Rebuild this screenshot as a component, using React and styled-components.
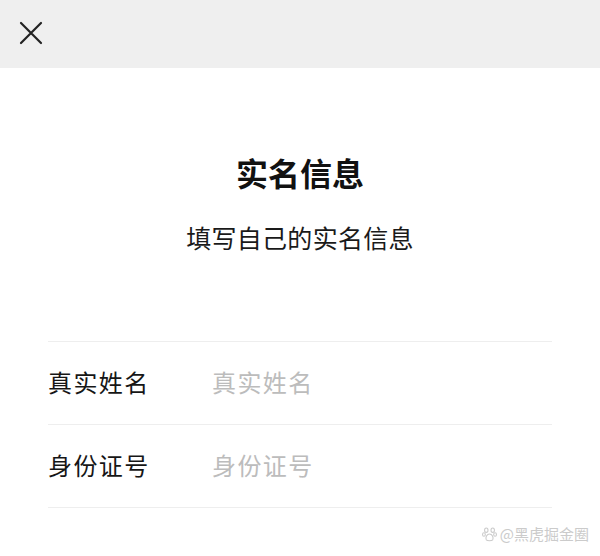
import React from 'react';
import styled, { createGlobalStyle } from 'styled-components';

const GlobalStyle = createGlobalStyle`
    html, body {
        margin: 0;
        padding: 0;
        background: #fff;
        font-family: "Noto Sans CJK SC", "Noto Sans", sans-serif;
    }
`

const Page = styled.div`
    width: 600px;
    height: 556px;
    position: relative;
    overflow: hidden;
    background: #fff;
`
const Header = styled.header`
    height: 68px;
    background: #efefef;
    display: flex;
    align-items: center;
    padding-left: 18px;
`
const CloseButton = styled.button`
    width: 26px;
    height: 26px;
    padding: 0;
    border: none;
    background: transparent;
    display: flex;
    align-items: center;
    justify-content: center;
    margin-top: -2px;
`
const Intro = styled.div`
    display: flex;
    flex-direction: column;
    align-items: center;
    padding-top: 84px;
`
const Title = styled.h1`
    margin: 0;
    font-size: 32px;
    line-height: 40px;
    font-weight: 700;
    color: #111;
`
const Subtitle = styled.p`
    margin: 29px 0 0;
    font-size: 25px;
    line-height: 32px;
    letter-spacing: 0.3px;
    color: #1a1a1a;
`
const Form = styled.div`
    margin: 88px 48px 0;
    border-top: 1px solid #eeeeee;
`
const Row = styled.label`
    display: flex;
    align-items: center;
    height: 83px;
    padding-bottom: 4px;
    box-sizing: border-box;
    border-bottom: 1px solid #eeeeee;
`
const Label = styled.span`
    width: 164px;
    font-size: 24px;
    color: #161616;
    letter-spacing: 1.4px;
`
const Input = styled.input`
    flex: 1;
    border: none;
    outline: none;
    padding: 0;
    font-family: inherit;
    font-size: 24px;
    color: #1a1a1a;
    background: transparent;
    letter-spacing: 1.4px;
    &::placeholder {
        color: #bcbcbc;
    }
`
const Watermark = styled.div`
    position: absolute;
    right: 11px;
    bottom: 13px;
    display: flex;
    align-items: center;
    gap: 3px;
    font-size: 15px;
    line-height: 18px;
    color: #cbcbcb;
`

const CloseIcon = () => (
    <svg width="24" height="24" viewBox="0 0 24 24">
        <path d="M2 2 L22 22 M22 2 L2 22" stroke="#222" strokeWidth="2.2" strokeLinecap="round" />
    </svg>
)

const PawIcon = () => (
    <svg width="15" height="15" viewBox="0 0 14 14" fill="none" stroke="#cbcbcb" strokeWidth="1">
        <ellipse cx="4" cy="3" rx="1.6" ry="2" />
        <ellipse cx="10" cy="3" rx="1.6" ry="2" />
        <ellipse cx="1.8" cy="7" rx="1.3" ry="1.7" />
        <ellipse cx="12.2" cy="7" rx="1.3" ry="1.7" />
        <path d="M7 6.5 C4.5 6.5 3 10 4 12 C5 13.2 9 13.2 10 12 C11 10 9.5 6.5 7 6.5 Z" />
    </svg>
)

const fields = [
    { label: '真实姓名', placeholder: '真实姓名' },
    { label: '身份证号', placeholder: '身份证号' },
]

const App = () => {
    return (
        <Page>
            <GlobalStyle />
            <Header>
                <CloseButton aria-label="关闭">
                    <CloseIcon />
                </CloseButton>
            </Header>
            <Intro>
                <Title>实名信息</Title>
                <Subtitle>填写自己的实名信息</Subtitle>
            </Intro>
            <Form>
                {fields.map(f => (
                    <Row key={f.label}>
                        <Label>{f.label}</Label>
                        <Input placeholder={f.placeholder} />
                    </Row>
                ))}
            </Form>
            <Watermark>
                <PawIcon />
                <span>@黑虎掘金圈</span>
            </Watermark>
        </Page>
    )
}
export default App;
